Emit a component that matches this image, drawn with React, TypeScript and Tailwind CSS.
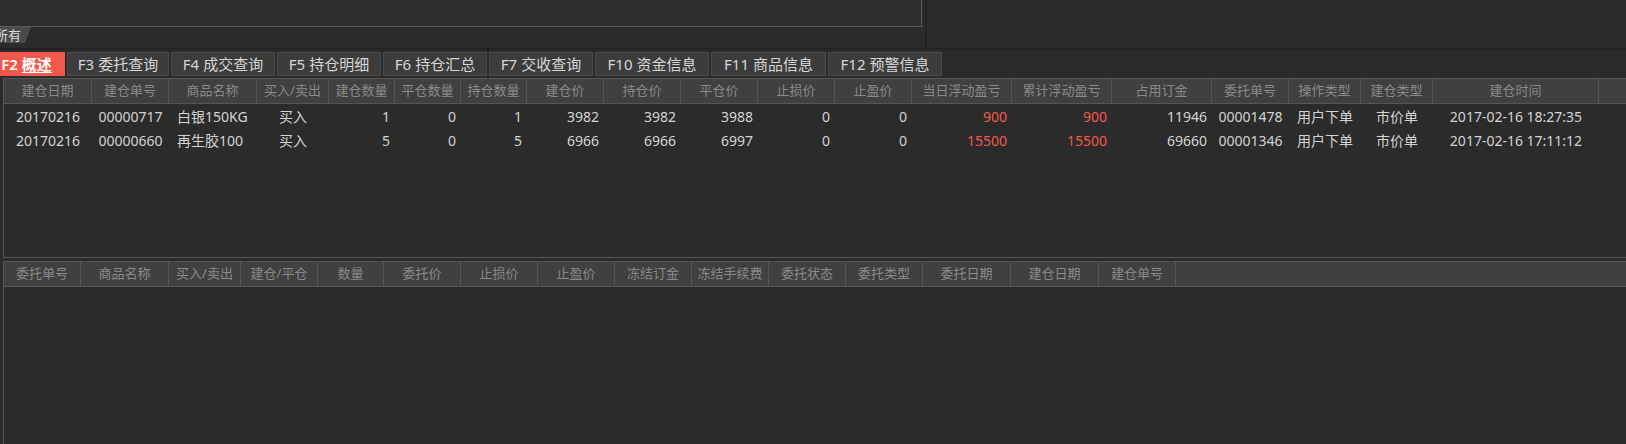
import React from 'react';

type Col = { t: string; w: number; a?: 'c' | 'l' | 'r' };

const topCols: Col[] = [
  { t: '建仓日期', w: 88, a: 'c' },
  { t: '建仓单号', w: 77, a: 'c' },
  { t: '商品名称', w: 88, a: 'l' },
  { t: '买入/卖出', w: 72, a: 'c' },
  { t: '建仓数量', w: 66, a: 'r' },
  { t: '平仓数量', w: 66, a: 'r' },
  { t: '持仓数量', w: 66, a: 'r' },
  { t: '建仓价', w: 77, a: 'r' },
  { t: '持仓价', w: 77, a: 'r' },
  { t: '平仓价', w: 77, a: 'r' },
  { t: '止损价', w: 77, a: 'r' },
  { t: '止盈价', w: 77, a: 'r' },
  { t: '当日浮动盈亏', w: 100, a: 'r' },
  { t: '累计浮动盈亏', w: 100, a: 'r' },
  { t: '占用订金', w: 100, a: 'r' },
  { t: '委托单号', w: 77, a: 'c' },
  { t: '操作类型', w: 72, a: 'c' },
  { t: '建仓类型', w: 72, a: 'c' },
  { t: '建仓时间', w: 166, a: 'c' },
];

const bottomCols: Col[] = [
  { t: '委托单号', w: 77 },
  { t: '商品名称', w: 88 },
  { t: '买入/卖出', w: 72 },
  { t: '建仓/平仓', w: 77 },
  { t: '数量', w: 66 },
  { t: '委托价', w: 77 },
  { t: '止损价', w: 77 },
  { t: '止盈价', w: 77 },
  { t: '冻结订金', w: 77 },
  { t: '冻结手续费', w: 77 },
  { t: '委托状态', w: 77 },
  { t: '委托类型', w: 77 },
  { t: '委托日期', w: 88 },
  { t: '建仓日期', w: 88 },
  { t: '建仓单号', w: 77 },
];

const rows = [
  ['20170216', '00000717', '白银150KG', '买入', '1', '0', '1', '3982', '3982', '3988', '0', '0', '900', '900', '11946', '00001478', '用户下单', '市价单', '2017-02-16 18:27:35'],
  ['20170216', '00000660', '再生胶100', '买入', '5', '0', '5', '6966', '6966', '6997', '0', '0', '15500', '15500', '69660', '00001346', '用户下单', '市价单', '2017-02-16 17:11:12'],
];

const tabs = [
  { k: 'F3', t: '委托查询', w: 102 },
  { k: 'F4', t: '成交查询', w: 104 },
  { k: 'F5', t: '持仓明细', w: 104 },
  { k: 'F6', t: '持仓汇总', w: 104 },
  { k: 'F7', t: '交收查询', w: 104 },
  { k: 'F10', t: '资金信息', w: 114 },
  { k: 'F11', t: '商品信息', w: 115 },
  { k: 'F12', t: '预警信息', w: 114 },
];

const HeaderRow = ({ cols }: { cols: Col[] }) => (
  <div className="flex h-[26px] shrink-0 border-y border-[#555555] bg-[#404040] text-[13px] text-[#8a8a8a]">
    {cols.map((c, i) => (
      <div
        key={i}
        className="flex shrink-0 items-center justify-center border-r border-[#555555] whitespace-nowrap"
        style={{ width: c.w }}
      >
        {c.t}
      </div>
    ))}
    <div className="flex-1" />
  </div>
);

const App: React.FC = () => {
  return (
    <div className="flex h-[444px] w-[1626px] flex-col overflow-hidden bg-[#2b2b2b] font-['Noto_Sans','Noto_Sans_CJK_SC',sans-serif]">
      {/* top panes */}
      <div className="flex h-[48px] shrink-0">
        <div className="flex w-[925px] flex-col">
          <div className="h-[27px] w-[922px] border-r border-b border-[#5a5a5a] bg-[#2d2d2d]" />
          <div className="h-[16px] w-[31px] overflow-hidden bg-[#4b4b4b] text-[13px] leading-[16px] text-[#dcdcdc] [clip-path:polygon(0_0,100%_0,calc(100%-6px)_100%,0_100%)]">
            <span className="-ml-[5px] block whitespace-nowrap">所有</span>
          </div>
        </div>
        <div className="w-[2px] bg-[#232323]" />
        <div className="flex-1 bg-[#2b2b2b]" />
      </div>
      <div className="h-[2px] shrink-0 bg-[#232323]" />

      {/* function tabs */}
      <div className="flex h-[28px] shrink-0 items-start gap-[2px] pt-[2px] text-[15px]">
        <div className="-ml-[12px] flex h-[24px] w-[77px] shrink-0 items-center justify-center bg-[#f1584b] font-semibold text-white">
          F2 <span className="ml-[4px] underline underline-offset-2">概述</span>
        </div>
        {tabs.map((t) => (
          <div
            key={t.k}
            className="flex h-[24px] shrink-0 items-center justify-center border border-[#4a4a4a] bg-[#3c3c3c] text-[#d6d6d6] whitespace-nowrap"
            style={{ width: t.w }}
          >
            {t.k} <span className="ml-[4px]">{t.t}</span>
          </div>
        ))}
      </div>

      {/* positions table */}
      <div className="ml-[3px] flex h-[180px] shrink-0 flex-col border-b border-l border-[#555555]">
        <HeaderRow cols={topCols} />
        <div className="flex-1 text-[14px] text-[#d4d4d4]">
          {rows.map((r, ri) => (
            <div key={ri} className="flex h-[24px] items-center">
              {r.map((v, ci) => {
                const c = topCols[ci];
                const red = ci === 12 || ci === 13;
                return (
                  <div
                    key={ci}
                    className={`shrink-0 whitespace-nowrap ${
                      c.a === 'c' ? 'text-center' : c.a === 'l' ? 'pl-[8px] text-left' : 'pr-[5px] text-right'
                    } ${red ? 'text-[#f4584a]' : ''}`}
                    style={{ width: c.w }}
                  >
                    {v}
                  </div>
                );
              })}
            </div>
          ))}
        </div>
      </div>

      <div className="h-[3px] shrink-0" />

      {/* orders table */}
      <div className="ml-[3px] flex flex-1 flex-col border-l border-[#555555]">
        <HeaderRow cols={bottomCols} />
        <div className="flex-1" />
      </div>
    </div>
  );
};

export default App;
